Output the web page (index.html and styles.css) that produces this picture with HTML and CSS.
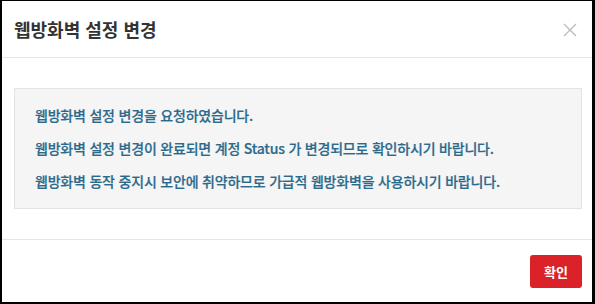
FILE: index.html
```html
<!DOCTYPE html>
<html lang="ko">
<head>
<meta charset="utf-8">
<link rel="stylesheet" href="styles.css">
</head>
<body>
<div class="frame">
  <div class="modal-header">
    <h4 class="modal-title">웹방화벽 설정 변경</h4>
    <button class="close" type="button" aria-label="닫기">
      <svg width="14" height="14" viewBox="0 0 14 14"><path d="M1 1L13 13M13 1L1 13" stroke="#bdbdbd" stroke-width="1.4" fill="none"/></svg>
    </button>
  </div>
  <div class="modal-body">
    <div class="info-box">
      <p>웹방화벽 설정 변경을 요청하였습니다.</p>
      <p>웹방화벽 설정 변경이 완료되면 계정 Status 가 변경되므로 확인하시기 바랍니다.</p>
      <p>웹방화벽 동작 중지시 보안에 취약하므로 가급적 웹방화벽을 사용하시기 바랍니다.</p>
    </div>
  </div>
  <div class="modal-footer">
    <button class="btn-confirm" type="button">확인</button>
  </div>
</div>
</body>
</html>
```
FILE: styles.css
```css
html, body {
  margin: 0;
  padding: 0;
  background: #000;
}
body {
  font-family: "Noto Sans CJK KR", "Noto Sans", sans-serif;
}
.frame {
  width: 595px;
  height: 304px;
  box-sizing: border-box;
  border-style: solid;
  border-color: #000;
  border-width: 1px 3px 2px 2px;
  background: #fff;
  display: flex;
  flex-direction: column;
}
.modal-header {
  height: 57px;
  box-sizing: border-box;
  border-bottom: 1px solid #e5e5e5;
  display: flex;
  align-items: center;
  justify-content: space-between;
  padding: 0 15px 0 12px;
}
.modal-title {
  margin: 0;
  font-size: 18px;
  font-weight: 700;
  color: #333;
  letter-spacing: 0;
}
.close {
  border: 0;
  background: none;
  padding: 0;
  margin-top: 2px;
  display: flex;
}
.modal-body {
  padding: 30px 10px 30px 12px;
  border-bottom: 1px solid #e5e5e5;
}
.info-box {
  background: #f5f5f5;
  border: 1px solid #e3e3e3;
  padding: 10px 20px 10px 20px;
}
.info-box p {
  margin: 0;
  font-size: 14px;
  line-height: 33px;
  font-weight: 500;
  color: #2c6a8c;
  letter-spacing: -0.2px;
  -webkit-text-stroke: 0.2px #2c6a8c;
}
.modal-footer {
  flex: 1;
  display: flex;
  justify-content: flex-end;
  align-items: flex-start;
  padding: 15px 10px 0 0;
}
.btn-confirm {
  width: 52px;
  height: 33px;
  border: 0;
  border-radius: 3px;
  background: #db2228;
  color: #fff;
  font-family: "Noto Sans CJK KR", sans-serif;
  font-size: 13px;
  font-weight: 700;
  padding: 0;
}
```
